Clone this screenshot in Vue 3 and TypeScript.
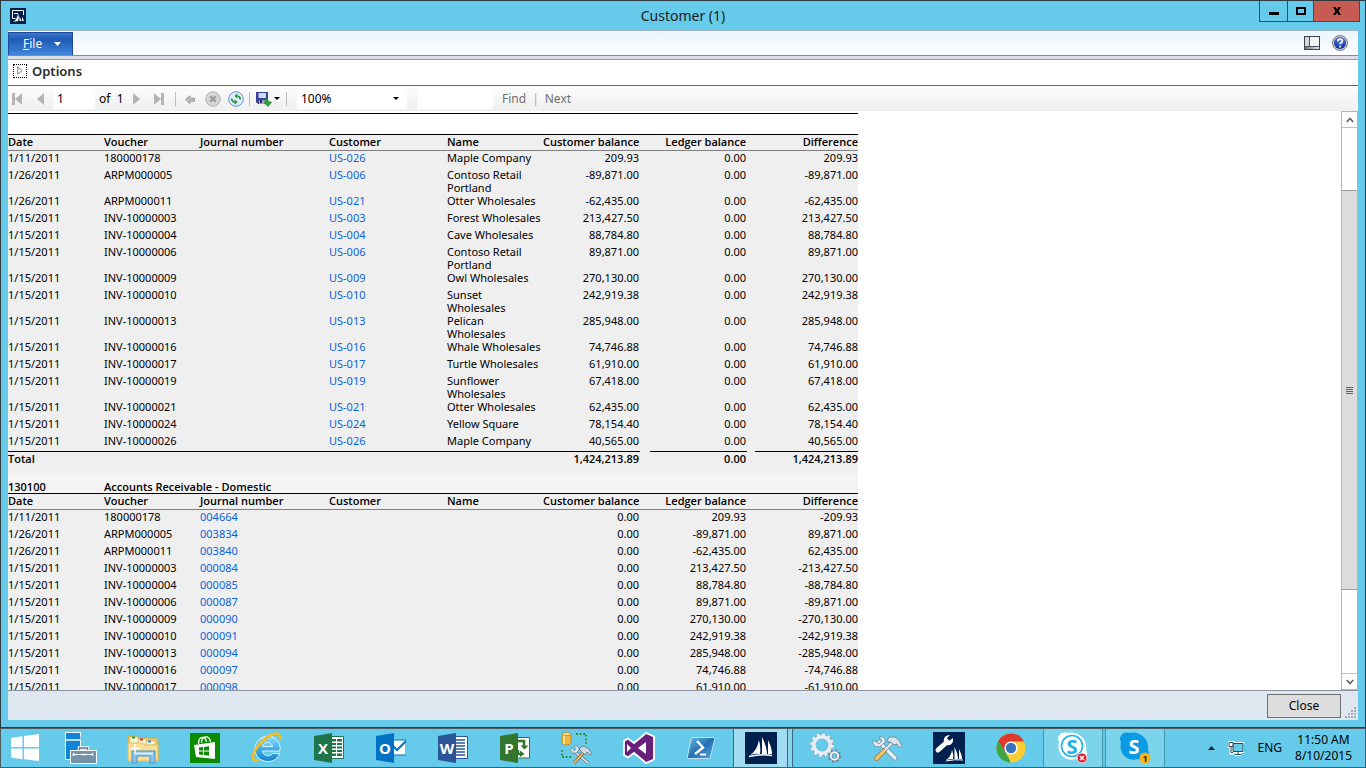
<script setup lang="ts">
import { ref } from 'vue'

interface Row {
  date: string
  voucher: string
  journal?: string
  customer?: string
  name?: string
  balance: string
  ledger: string
  difference: string
}

interface Section {
  account?: string
  title?: string
  rows: Row[]
  total?: string[]
}

const domestic = (voucher: string, code: string, name: string, amount: string, date = '1/15/2011'): Row => ({
  date,
  voucher,
  customer: code,
  name,
  balance: amount,
  ledger: '0.00',
  difference: amount,
})

const ledgerLine = (voucher: string, journal: string, amount: string, date = '1/15/2011'): Row => ({
  date,
  voucher,
  journal,
  balance: '0.00',
  ledger: amount,
  difference: amount.startsWith('-') ? amount.slice(1) : '-' + amount,
})

const sections: Section[] = [
  {
    rows: [
      domestic('180000178', 'US-026', 'Maple Company', '209.93', '1/11/2011'),
      domestic('ARPM000005', 'US-006', 'Contoso Retail\nPortland', '-89,871.00', '1/26/2011'),
      domestic('ARPM000011', 'US-021', 'Otter Wholesales', '-62,435.00', '1/26/2011'),
      domestic('INV-10000003', 'US-003', 'Forest Wholesales', '213,427.50'),
      domestic('INV-10000004', 'US-004', 'Cave Wholesales', '88,784.80'),
      domestic('INV-10000006', 'US-006', 'Contoso Retail\nPortland', '89,871.00'),
      domestic('INV-10000009', 'US-009', 'Owl Wholesales', '270,130.00'),
      domestic('INV-10000010', 'US-010', 'Sunset\nWholesales', '242,919.38'),
      domestic('INV-10000013', 'US-013', 'Pelican\nWholesales', '285,948.00'),
      domestic('INV-10000016', 'US-016', 'Whale Wholesales', '74,746.88'),
      domestic('INV-10000017', 'US-017', 'Turtle Wholesales', '61,910.00'),
      domestic('INV-10000019', 'US-019', 'Sunflower\nWholesales', '67,418.00'),
      domestic('INV-10000021', 'US-021', 'Otter Wholesales', '62,435.00'),
      domestic('INV-10000024', 'US-024', 'Yellow Square', '78,154.40'),
      domestic('INV-10000026', 'US-026', 'Maple Company', '40,565.00'),
    ],
    total: ['1,424,213.89', '0.00', '1,424,213.89'],
  },
  {
    account: '130100',
    title: 'Accounts Receivable - Domestic',
    rows: [
      ledgerLine('180000178', '004664', '209.93', '1/11/2011'),
      ledgerLine('ARPM000005', '003834', '-89,871.00', '1/26/2011'),
      ledgerLine('ARPM000011', '003840', '-62,435.00', '1/26/2011'),
      ledgerLine('INV-10000003', '000084', '213,427.50'),
      ledgerLine('INV-10000004', '000085', '88,784.80'),
      ledgerLine('INV-10000006', '000087', '89,871.00'),
      ledgerLine('INV-10000009', '000090', '270,130.00'),
      ledgerLine('INV-10000010', '000091', '242,919.38'),
      ledgerLine('INV-10000013', '000094', '285,948.00'),
      ledgerLine('INV-10000016', '000097', '74,746.88'),
      ledgerLine('INV-10000017', '000098', '61,910.00'),
    ],
  },
]

const page = ref('1')
const query = ref('')
const zoom = ref('100%')
</script>

<template>
  <div class="desktop">
    <main class="window">
      <header class="titlebar">
        <svg class="app-icon" width="16" height="16" viewBox="0 0 16 16">
          <rect width="16" height="16" fill="#00204f" />
          <path d="M5.500 10.500h-3v-8h11V7" fill="none" stroke="#fff" />
          <path d="M4 5h4v1H4zM3 14q4-2 5-9 1.500 5 0 8zM9.500 13V8l2 5zM12 13V8.500l2 4.500z" fill="#fff" />
        </svg>
        <h1>Customer (1)</h1>
        <div class="window-buttons">
          <button type="button" class="win-min" aria-label="Minimize">
            <svg width="12" height="10" viewBox="0 0 12 10"><path d="M1 6h10v3H1z" /></svg>
          </button>
          <button type="button" class="win-max" aria-label="Maximize">
            <svg width="12" height="10" viewBox="0 0 12 10"><path d="M1 1h10v8H1zM3 3v4h6V3z" fill-rule="evenodd" /></svg>
          </button>
          <button type="button" class="win-close" aria-label="Close window">
            <svg width="12" height="10" viewBox="0 0 12 10"><path d="M2 1h2.500L6 3.300 7.500 1H10L7.500 5 10 9H7.500L6 6.700 4.500 9H2l2.500-4z" /></svg>
          </button>
        </div>
      </header>

      <div class="frame">
        <div class="ribbon">
          <button type="button" class="file-menu">
            <span><u>F</u>ile</span>
            <svg width="7" height="4" viewBox="0 0 7 4"><path d="M0 0h7L3.500 4z" fill="#fff" /></svg>
          </button>
          <div class="ribbon-tools">
            <button type="button" class="plain" aria-label="Layout">
              <svg width="16" height="14" viewBox="0 0 16 14">
                <defs>
                  <linearGradient id="paneFill" x1="0" x2="1" y1="0" y2="0"><stop offset="0" stop-color="#6f757d" /><stop offset="1" stop-color="#e8ebee" /></linearGradient>
                </defs>
                <rect x=".5" y=".5" width="15" height="13" fill="#f2f2f2" stroke="#3d4650" />
                <rect x="1" y="1" width="4" height="9" fill="#d5d9de" />
                <rect x="1" y="10" width="14" height="3" fill="url(#paneFill)" />
                <path d="M5.500 1v9M1 10.500h14" stroke="#4a525c" />
              </svg>
            </button>
            <button type="button" class="plain" aria-label="Help">
              <svg width="16" height="16" viewBox="0 0 16 16">
                <defs>
                  <radialGradient id="helpFill" cx=".5" cy=".3" r=".7"><stop offset="0" stop-color="#5c86e8" /><stop offset="1" stop-color="#0a2a9c" /></radialGradient>
                </defs>
                <circle cx="8" cy="8" r="7.500" fill="#d5d5d5" stroke="#777" />
                <circle cx="8" cy="8" r="6" fill="url(#helpFill)" />
                <path d="M5.800 6.200c0-3 4.600-2.800 4.600-.2 0 1.700-2.300 1.700-2.300 3.300M8.100 10.800v1.700" fill="none" stroke="#fff" stroke-width="1.700" />
              </svg>
            </button>
          </div>
        </div>

        <section class="options">
          <button type="button" class="expander" aria-label="Expand options">
            <svg width="6" height="9" viewBox="0 0 6 9"><path d="M.7.8v7.400L5 4.500z" fill="#fff" stroke="#808080" /></svg>
          </button>
          <h2>Options</h2>
        </section>

        <div class="toolbar">
          <button type="button" class="plain nav" aria-label="First page">
            <svg width="12" height="12" viewBox="0 0 12 12"><path d="M1 0h3v12H1zM11 0v12L4 6z" fill="#b4b4b4" /></svg>
          </button>
          <button type="button" class="plain nav" aria-label="Previous page">
            <svg width="12" height="12" viewBox="0 0 12 12"><path d="M10 0v12L3 6z" fill="#b4b4b4" /></svg>
          </button>
          <input v-model="page" class="page-box" type="text" aria-label="Current page" />
          <span class="page-count">of&nbsp; 1</span>
          <button type="button" class="plain nav" aria-label="Next page">
            <svg width="12" height="12" viewBox="0 0 12 12"><path d="M3 0v12l7-6z" fill="#b4b4b4" /></svg>
          </button>
          <button type="button" class="plain nav" aria-label="Last page">
            <svg width="12" height="12" viewBox="0 0 12 12"><path d="M1 0v12l7-6zM8 0h3v12H8z" fill="#b4b4b4" /></svg>
          </button>
          <span class="rule"></span>
          <button type="button" class="plain tool" aria-label="Back">
            <svg width="16" height="16" viewBox="0 0 16 16"><path d="M3.500 8.500 8 4.800v2.400h4.500v3H8v2.400z" fill="#bdbdbd" stroke="#9a9a9a" /></svg>
          </button>
          <button type="button" class="plain tool" aria-label="Stop">
            <svg width="16" height="16" viewBox="0 0 16 16">
              <circle cx="8" cy="8" r="7.300" fill="#d6d6d6" stroke="#b4b4b4" />
              <path d="m5.200 5.200 5.600 5.600m0-5.600-5.600 5.600" stroke="#989898" stroke-width="2" />
            </svg>
          </button>
          <button type="button" class="plain tool" aria-label="Refresh">
            <svg width="16" height="16" viewBox="0 0 16 16">
              <circle cx="8" cy="8" r="7.300" fill="#e4eefc" stroke="#5f92d8" />
              <path d="M12.300 8.500c0-2-.8-3.300-3-3.500" fill="none" stroke="#24963a" stroke-width="1.700" />
              <path d="M9.500 2.200v5.400L6.300 5z" fill="#24963a" />
              <path d="M3.700 7.500c0 2 .8 3.300 3 3.500" fill="none" stroke="#24963a" stroke-width="1.700" />
              <path d="M6.500 8.400v5.400L9.700 11z" fill="#24963a" />
            </svg>
          </button>
          <span class="rule"></span>
          <button type="button" class="plain export" aria-label="Export">
            <svg width="16" height="16" viewBox="0 0 16 16">
              <path d="M0 1h12v12H2l-2-2z" fill="#3c3f96" />
              <path d="M2.500 2h7.500v5H2.500z" fill="#c9daf5" />
              <path d="M3 9h6v4H3z" fill="#a6a9bd" />
              <path d="M4 9h2v3H4z" fill="#26285e" />
              <path d="M8 8h3l2 3h2.500L12 15.500 8.500 12H10z" fill="#2eaa36" stroke="#167a20" stroke-width=".7" />
            </svg>
            <svg width="6" height="3" viewBox="0 0 6 3"><path d="M0 0h6L3 3z" /></svg>
          </button>
          <span class="rule"></span>
          <span class="zoom-box">
            <select v-model="zoom" aria-label="Zoom">
              <option>100%</option>
              <option>150%</option>
              <option>200%</option>
            </select>
            <svg width="6" height="3" viewBox="0 0 6 3"><path d="M0 0h6L3 3z" /></svg>
          </span>
          <input v-model="query" class="find-box" type="text" aria-label="Find text" />
          <button type="button" class="plain find">Find</button>
          <span class="bar">|</span>
          <button type="button" class="plain find">Next</button>
        </div>

        <div class="viewer">
          <div class="report">
            <table v-for="(section, s) in sections" :key="s">
              <colgroup>
                <col class="c-date" /><col class="c-voucher" /><col class="c-journal" /><col class="c-customer" />
                <col class="c-name" /><col class="c-balance" /><col class="c-ledger" /><col class="c-difference" />
              </colgroup>
              <thead>
                <tr v-if="section.account" class="account">
                  <th>{{ section.account }}</th>
                  <th colspan="7">{{ section.title }}</th>
                </tr>
                <tr class="heads">
                  <th>Date</th>
                  <th>Voucher</th>
                  <th>Journal number</th>
                  <th>Customer</th>
                  <th>Name</th>
                  <th class="num">Customer balance</th>
                  <th class="num">Ledger balance</th>
                  <th class="num last">Difference</th>
                </tr>
              </thead>
              <tbody>
                <tr v-for="row in section.rows" :key="row.voucher">
                  <td>{{ row.date }}</td>
                  <td>{{ row.voucher }}</td>
                  <td><a v-if="row.journal" href="#">{{ row.journal }}</a></td>
                  <td><a v-if="row.customer" href="#">{{ row.customer }}</a></td>
                  <td class="name">{{ row.name }}</td>
                  <td class="num">{{ row.balance }}</td>
                  <td class="num">{{ row.ledger }}</td>
                  <td class="num last">{{ row.difference }}</td>
                </tr>
              </tbody>
              <tfoot v-if="section.total">
                <tr>
                  <th colspan="5"><div>Total</div></th>
                  <td v-for="(sum, i) in section.total" :key="i" class="sum"><div>{{ sum }}</div></td>
                </tr>
              </tfoot>
            </table>
          </div>
          <div class="scrollbar">
            <button type="button" class="arrow" aria-label="Scroll up">
              <svg width="8" height="6" viewBox="0 0 8 6"><path d="m.8 5 3.200-3.500L7.200 5" fill="none" stroke="#606060" stroke-width="1.600" /></svg>
            </button>
            <div class="track">
              <div class="thumb"><i></i><i></i><i></i><i></i></div>
            </div>
            <button type="button" class="arrow" aria-label="Scroll down">
              <svg width="8" height="6" viewBox="0 0 8 6"><path d="M.8 1 4 4.500 7.200 1" fill="none" stroke="#606060" stroke-width="1.600" /></svg>
            </button>
          </div>
        </div>

        <footer class="footer">
          <button type="button" class="close-button">Close</button>
          <svg class="grip" width="11" height="11" viewBox="0 0 11 11">
            <path d="M9 0h2v2H9zM9 3h2v2H9zM6 3h2v2H6zM9 6h2v2H9zM6 6h2v2H6zM3 6h2v2H3zM9 9h2v2H9zM6 9h2v2H6zM3 9h2v2H3zM0 9h2v2H0z" fill="#a9adb2" />
          </svg>
        </footer>
      </div>
    </main>

    <nav class="taskbar">
      <button type="button" class="start" aria-label="Start">
        <svg width="28" height="28" viewBox="0 0 28 28">
          <path d="M0 4 11.500 2.300V13H0zM13 2.100 28 0v13H13zM0 14.500h11.500v10.700L0 23.500zM13 14.500h15V27l-15-1.700z" fill="#fff" />
        </svg>
      </button>

      <button type="button" class="slot" aria-label="Server Manager">
        <svg width="32" height="32" viewBox="0 0 32 32">
          <path d="M.5.500h15v27H.5z" fill="#0f84da" stroke="#fff" />
          <path d="M.5 8 15.500 4.500V8z" fill="#0f84da" /><path d="M0 8h16" stroke="#fff" stroke-width="1.500" />
          <path d="M14.500 18v-2h8v2" fill="none" stroke="#fff" stroke-width="3.500" />
          <path d="M14.500 18v-2h8v2" fill="none" stroke="#5a7690" stroke-width="1.500" />
          <path d="M5.500 18.500h26v13h-26z" fill="#7592ad" stroke="#fff" />
          <path d="M8 22.500h9m2 0h9" stroke="#fff" /><path d="M8.500 21v3m19-3v3M17 22.500h3" stroke="#fff" stroke-width="1.500" />
        </svg>
      </button>

      <button type="button" class="slot" aria-label="File Explorer">
        <svg width="32" height="32" viewBox="0 0 32 32">
          <path d="M1 4h9l2 2h17l2 2v19H1z" fill="#e7c873" stroke="#c9a650" />
          <path d="M3 5h8v7H3zM11 7h8v5h-8zM19 9h9v4h-9z" fill="#fff6d8" stroke="#d6b65f" stroke-width=".6" />
          <path d="M5 4.500h3v2H5z" fill="#12a32a" /><path d="M13 6.500h3v2h-3z" fill="#dc3025" /><path d="M21 8.500h3v2h-3z" fill="#2688dc" />
          <path d="M1 11h14l3 2h13v16H1z" fill="#f8df91" stroke="#dfbf68" />
          <path d="M5 31V19h23v12h-5v-7H10v7z" fill="#86c1e6" stroke="#5393c4" />
          <path d="M7 20.500h19v2H7z" fill="#d6effd" />
          <path d="M8 12v9m-4.500-4.500h9" stroke="#fff" stroke-width="1.400" />
        </svg>
      </button>

      <button type="button" class="slot" aria-label="Store">
        <svg width="30" height="30" viewBox="0 0 30 30">
          <path d="M0 0h30v30H0z" fill="#0a8c00" />
          <path d="M8.500 11c0-8 7-9 8-2m-5 1c0-8 8-8 9-1" fill="none" stroke="#fff" stroke-width="1.300" />
          <path d="m4 12 21-3v17L6 24z" fill="#fff" />
          <path d="m9 14.500 4-.5v3.500H9zM14 13.900l5-.6v4.200h-5zM9 18.500h4V22l-4-.4zM14 18.500h5v4.200l-5-.6z" fill="#0a8c00" />
        </svg>
      </button>

      <button type="button" class="slot" aria-label="Internet Explorer">
        <svg width="32" height="32" viewBox="0 0 32 32">
          <defs>
            <linearGradient id="ieFill" x1="0" x2="0" y1="0" y2="1"><stop offset="0" stop-color="#9be2fb" /><stop offset=".5" stop-color="#40aee9" /><stop offset="1" stop-color="#1781cd" /></linearGradient>
          </defs>
          <path d="M17 4C10 4 4 9.500 4 17s6 12.500 13 12.500c5.500 0 10-3 11.500-8h-7c-2.500 4-10 2.500-10-2.500h17.500C30 10 24.500 4 17 4zm-5.500 10.500c1-5.500 9-5.500 10 0z" fill="url(#ieFill)" stroke="#d6f4ff" />
          <path d="M6.500 28C-1 30 1 20 10 11 19 1 30-2 29 7" fill="none" stroke="#f5bc22" stroke-width="2.600" stroke-linecap="round" />
        </svg>
      </button>

      <button type="button" class="slot" aria-label="Excel">
        <svg width="30" height="32" viewBox="0 0 30 32">
          <path d="M16 4.500h13.500v22H16z" fill="#fff" stroke="#20744a" />
          <path d="M17 7h5v2.500h-5zM23 7h5v2.500h-5zM17 11h5v2h-5zM23 11h5v2h-5zM17 14.500h5v2h-5zM23 14.500h5v2h-5zM17 18h5v2h-5zM23 18h5v2h-5zM17 21.500h5V24h-5zM23 21.500h5V24h-5z" fill="#20744a" />
          <path d="M0 4 18 1v30L0 28z" fill="#20744a" />
          <text x="9" y="21.500">X</text>
        </svg>
      </button>

      <button type="button" class="slot" aria-label="Outlook">
        <svg width="30" height="32" viewBox="0 0 30 32">
          <path d="M16 8h14v15H16z" fill="#fff" stroke="#0072c6" />
          <path d="m16 13 5 5 9-9" fill="none" stroke="#0072c6" stroke-width="2" />
          <path d="M0 4 18 1v30L0 28z" fill="#0072c6" />
          <text x="9" y="21.500">O</text>
        </svg>
      </button>

      <button type="button" class="slot" aria-label="Word">
        <svg width="30" height="32" viewBox="0 0 30 32">
          <path d="M16 4.500h13.500v22H16z" fill="#fff" stroke="#2a5699" />
          <path d="M18 8h9M18 11h9M18 14h9M18 17h9M18 20h9M18 23h9" stroke="#2a5699" stroke-width="1.300" />
          <path d="M0 4 18 1v30L0 28z" fill="#2a5699" />
          <text x="9" y="21.500">W</text>
        </svg>
      </button>

      <button type="button" class="slot" aria-label="Project">
        <svg width="30" height="32" viewBox="0 0 30 32">
          <path d="M16 5.500h13.500v20.500H16z" fill="#fff" stroke="#31752f" />
          <path d="M18 9h6v6M20 22h-2v-4" fill="none" stroke="#31752f" stroke-width="2.500" />
          <path d="M20.500 13.500h8l-4 4zM20 18.500l4.500 3.500-4.500 3z" fill="#31752f" />
          <path d="M0 4 18 1v30L0 28z" fill="#31752f" />
          <text x="9" y="21.500">P</text>
        </svg>
      </button>

      <button type="button" class="slot" aria-label="SQL Server Management Studio">
        <svg width="32" height="32" viewBox="0 0 32 32">
          <path d="M15 2h10v11M1 18v7h11" fill="none" stroke="#2c8c30" stroke-width="1.800" stroke-dasharray="1.800 1.800" />
          <path d="M1 2v9c0 2.500 9 2.500 9 0V2z" fill="#eeb73b" stroke="#b47a18" stroke-width=".7" />
          <path d="M3 3v9" stroke="#fff2ac" stroke-width="1.600" />
          <ellipse cx="5.500" cy="2" rx="4.500" ry="1.600" fill="#fbe18a" stroke="#b47a18" stroke-width=".7" />
          <path d="m14 20 13 11" stroke="#6f7e8c" stroke-width="3" /><path d="m14 20 13 11" stroke="#e8edf1" stroke-width="1.600" />
          <path d="M11 15c-3 3 0 7 4 6l3-3c0-4-3-5-5-4l2 3-2 2z" fill="#dde4ea" stroke="#6f7e8c" stroke-width=".7" />
          <path d="m13 31 10-11" stroke="#a1681c" stroke-width="3" /><path d="m13 31 10-11" stroke="#efc66a" stroke-width="1.400" />
          <path d="m18 17 4-3 6 3 3 5-2 1-3-3-2 3z" fill="#d2d9df" stroke="#66737f" stroke-width=".8" />
        </svg>
      </button>

      <button type="button" class="slot" aria-label="Visual Studio">
        <svg width="32" height="32" viewBox="0 0 32 32">
          <path d="m1 9 4-2.500 6 4.500L23 1l8 3.500v23L23 31 11 21l-6 4.500L1 23z" fill="#68217a" stroke="#fff" stroke-width="1.800" />
          <path d="m4 12 4 4-4 4zM15 16l8-6v12z" fill="#fff" />
        </svg>
      </button>

      <button type="button" class="slot" aria-label="PowerShell">
        <svg width="30" height="32" viewBox="0 0 30 32">
          <defs>
            <linearGradient id="psFill" x1="0" x2="1" y1="0" y2="1"><stop offset="0" stop-color="#77bce6" /><stop offset=".5" stop-color="#2270b4" /><stop offset="1" stop-color="#5aa9df" /></linearGradient>
          </defs>
          <path d="M7 5.500h20q2 0 1.600 2L24.500 25q-.4 1.500-2 1.500h-20Q1 26.500 1.400 25L5 7q.4-1.500 2-1.500z" fill="url(#psFill)" stroke="#bde0f4" />
          <path d="m11 9 6 6.500L9 22" fill="none" stroke="#fff" stroke-width="2.400" />
          <path d="M14 22.500h6" stroke="#fff" stroke-width="2" />
        </svg>
      </button>

      <button type="button" class="slot grouped active" aria-label="Dynamics AX">
        <svg width="32" height="32" viewBox="0 0 32 32">
          <path d="M0 0h32v32H0z" fill="#00204f" />
          <path d="M5 23Q12 19 14 8q2 8 1 14-5-1-10 1zM17 22V5q5 10 5 17zM23 22V8q4 8 4 14z" fill="#fff" />
          <path d="M4 24.500q12-3 23-1" fill="none" stroke="#fff" stroke-width="1.600" />
        </svg>
      </button>

      <button type="button" class="slot" aria-label="Services">
        <svg width="32" height="32" viewBox="0 0 32 32">
          <circle cx="13" cy="13" r="10.500" fill="none" stroke="#84acc5" stroke-width="4" stroke-dasharray="3 2.500" />
          <circle cx="13" cy="13" r="8.500" fill="none" stroke="#84acc5" stroke-width="5" />
          <circle cx="13" cy="13" r="10.500" fill="none" stroke="#eef4f7" stroke-width="2.600" stroke-dasharray="2.600 2.900" />
          <circle cx="13" cy="13" r="8.200" fill="none" stroke="#e5eff5" stroke-width="3.600" />
          <circle cx="25.500" cy="24" r="5" fill="none" stroke="#6a7f8e" stroke-width="3" stroke-dasharray="2 1.900" />
          <circle cx="25.500" cy="24" r="3.700" fill="#66cbea" stroke="#6a7f8e" stroke-width="3" />
          <circle cx="25.500" cy="24" r="3.700" fill="none" stroke="#eef4f7" stroke-width="2" />
        </svg>
      </button>

      <button type="button" class="slot" aria-label="Tools">
        <svg width="32" height="32" viewBox="0 0 32 32">
          <path d="m8 10 16 16" stroke="#70899c" stroke-width="4.600" stroke-linecap="round" />
          <path d="m8 10 16 16" stroke="#e6eff5" stroke-width="3.200" stroke-linecap="round" />
          <path d="M2 8c-1 6 4 8 8 6l4-4c1-4-3-6-6-5l3 4-3 3z" fill="#e6eef3" stroke="#70899c" stroke-width=".8" />
          <path d="m5.500 26.500 8-8" stroke="#ab772a" stroke-width="5" stroke-linecap="round" />
          <path d="m5.500 26.500 8-8" stroke="#edc36b" stroke-width="3.200" stroke-linecap="round" />
          <path d="m14 18 8-8" stroke="#70899c" stroke-width="3.600" /><path d="m14 18 8-8" stroke="#e6eff5" stroke-width="2.200" />
          <path d="m16 9 2-4h6l4 3 2 4 1 2-3 2-2-4-3 1-2-2z" fill="#dbe3ea" stroke="#758899" stroke-width=".9" />
        </svg>
      </button>

      <button type="button" class="slot" aria-label="Dynamics AX configuration">
        <svg width="32" height="32" viewBox="0 0 32 32">
          <path d="M0 0h32v32H0z" fill="#00204f" />
          <path d="m5 18 9-8" stroke="#fff" stroke-width="5" stroke-linecap="round" />
          <path d="M12 12c-3-5 0-9 5-9l-3 3 2 3 4-3c1 6-4 9-8 6z" fill="#fff" />
          <path d="M13 28q5-3 6-10 2 5 1 9-3 0-7 1zM21.500 27V15q3.500 6 3.500 12zM26 27V17q3 6 3 10z" fill="#fff" />
          <path d="M13 29q9-2 17-1" fill="none" stroke="#fff" />
        </svg>
      </button>

      <button type="button" class="slot" aria-label="Chrome">
        <svg width="30" height="30" viewBox="0 0 30 30">
          <circle cx="15" cy="15" r="14.500" fill="#fbcf33" />
          <path d="M2.300 8A14.500 14.500 0 0 1 28 8.500H15z" fill="#dd392c" />
          <path d="M2.300 8 15 8.500l-6 10 6 11A14.500 14.500 0 0 1 2.300 8z" fill="#3fa646" />
          <path d="M2.300 8 9 18.500 14 8.500z" fill="#dd392c" />
          <path d="m2.300 8 6.700 10.500L14 29.500A14.500 14.500 0 0 1 2.300 8z" fill="#3fa646" />
          <circle cx="15" cy="15" r="6.600" fill="#fff" /><circle cx="15" cy="15" r="5.200" fill="#3772bd" />
        </svg>
      </button>

      <button type="button" class="slot running" aria-label="Skype">
        <svg width="32" height="32" viewBox="0 0 32 32">
          <path d="M10 1C4-1-1 5 2 10c-3 12 7 20 17 17 8 4 13-3 10-9C31 7 20-2 10 1z" fill="#fff" />
          <circle cx="15" cy="14" r="10.500" fill="none" stroke="#1eb2eb" stroke-width="1.600" />
          <text x="15" y="21.500" class="skype blue">S</text>
          <circle cx="25" cy="26" r="5" fill="#df1d2d" stroke="#fff" stroke-width=".8" />
          <path d="m23 24 4 4m0-4-4 4" stroke="#fff" stroke-width="1.500" />
        </svg>
      </button>

      <button type="button" class="slot running" aria-label="Skype for Business">
        <svg width="32" height="32" viewBox="0 0 32 32">
          <path d="M10 1C4-1-1 5 2 10c-3 12 7 20 17 17 8 4 13-3 10-9C31 7 20-2 10 1z" fill="#0a9be2" />
          <text x="15" y="22" class="skype">S</text>
          <circle cx="26" cy="26" r="5.500" fill="#fdb515" />
          <text x="26" y="29.500" class="badge">1</text>
        </svg>
      </button>

      <div class="tray">
        <button type="button" class="plain" aria-label="Show hidden icons">
          <svg width="7" height="4" viewBox="0 0 7 4"><path d="M3.500 0 7 4H0z" fill="#222" /></svg>
        </button>
        <button type="button" class="plain" aria-label="Network">
          <svg width="16" height="15" viewBox="0 0 16 15">
            <path d="M5 2.500h10v8H5zM7 13.500h6M10 11v2" fill="none" stroke="#fff" stroke-width="3" />
            <path d="M1 1.500h4v4H1zM3 5v7h3" fill="#fff" stroke="#fff" stroke-width="3" />
            <path d="M5 2.500h10v8H5z" fill="#66cbea" stroke="#34494f" />
            <path d="M7 13.500h6M10 11v2" stroke="#34494f" />
            <path d="M1 1.500h4v4H1z" fill="#fff" stroke="#34494f" /><path d="M3 6v5.500h2" fill="none" stroke="#34494f" />
          </svg>
        </button>
        <span class="lang">ENG</span>
        <time class="clock">11:50 AM<br />8/10/2015</time>
      </div>
    </nav>
  </div>
</template>

<style>
html,
body {
  margin: 0;
  overflow: hidden;
}
</style>

<style scoped>
* {
  box-sizing: border-box;
}

.desktop {
  display: flex;
  flex-direction: column;
  height: 100vh;
  background: #66cbea;
  color: #000;
  font-family: 'Noto Sans', 'Open Sans', sans-serif;
  font-size: 12px;
  line-height: 16px;
}

button,
input,
select {
  margin: 0;
  padding: 0;
  border: 0;
  border-radius: 0;
  background: none;
  color: inherit;
  font: inherit;
}

svg {
  display: block;
  flex: none;
}

.plain {
  display: flex;
  align-items: center;
  justify-content: center;
}

.window {
  display: flex;
  flex: 1;
  flex-direction: column;
  min-height: 0;
  padding: 0 7px 7px;
  border: 1px solid #2f3a40;
}

.titlebar {
  display: grid;
  grid-template-columns: 1fr auto 1fr;
  align-items: center;
  height: 29px;
}

.app-icon {
  margin-left: 2px;
}

h1 {
  margin: 0;
  color: #1c1c1c;
  font-size: 14px;
  font-weight: 400;
  line-height: 20px;
}

.window-buttons {
  display: flex;
  align-self: start;
  justify-self: end;
  height: 21px;
  margin-right: -2px;
  border: 1px solid #2b5361;
  border-top: 0;
}

.window-buttons button {
  display: flex;
  align-items: center;
  justify-content: center;
  width: 27px;
}

.window-buttons .win-max {
  width: 27px;
  border-right: 1px solid #2b5361;
  border-left: 1px solid #2b5361;
}

.window-buttons .win-close {
  width: 45px;
  background: #c75b53;
}

.frame {
  display: flex;
  flex: 1;
  flex-direction: column;
  min-height: 0;
}

.ribbon {
  display: flex;
  justify-content: space-between;
  height: 26px;
  border-top: 1px solid #9fb4c0;
  border-bottom: 1px solid #858a96;
  background: linear-gradient(#eaf5fe, #fdfefe);
}

.file-menu {
  display: flex;
  align-items: center;
  gap: 12px;
  width: 65px;
  margin-top: 1px;
  padding-left: 14px;
  border: 1px solid #1b4aa0;
  border-bottom: 0;
  background: linear-gradient(#3a78cc, #1f5bb4 30%, #4186dd);
  color: #fff;
}

.ribbon-tools {
  display: flex;
  gap: 12px;
  padding-right: 10px;
}

.options {
  display: flex;
  align-items: center;
  gap: 5px;
  height: 30px;
  padding: 4px 5px;
  border-bottom: 1px solid #65696b;
  background: linear-gradient(#dfdfea 3px, #9a9aa2 3px, #9a9aa2 4px, #fff 4px);
}

.expander {
  display: flex;
  align-items: center;
  justify-content: center;
  width: 14px;
  height: 14px;
  border: 1px dotted #000;
}

h2 {
  margin: 0;
  color: #2a2a2a;
  font-size: 13px;
  font-weight: 600;
  line-height: 16px;
}

.toolbar {
  display: flex;
  align-items: center;
  height: 25px;
  background: linear-gradient(#fdfdfd, #efefef);
}

.nav {
  width: 23px;
  height: 20px;
  padding-right: 6px;
}

.page-box {
  width: 41px;
  height: 21px;
  padding-left: 3px;
  background: #fff;
}

.page-count {
  width: 32px;
  padding-left: 4px;
  white-space: nowrap;
}

.rule {
  width: 1px;
  height: 14px;
  margin: 0 2px;
  background: #bdbdbd;
}

.tool {
  width: 23px;
  height: 20px;
}

.export {
  gap: 2px;
  padding: 0 4px;
}

.zoom-box {
  display: grid;
  grid-template-columns: 1fr 14px;
  align-items: center;
  width: 110px;
  height: 21px;
  margin-left: 8px;
  background: #fff;
}

.zoom-box select {
  grid-area: 1 / 1 / 2 / 3;
  height: 21px;
  padding-left: 4px;
  appearance: none;
}

.zoom-box svg {
  grid-area: 1 / 2 / 2 / 3;
  pointer-events: none;
}

.find-box {
  width: 75px;
  height: 21px;
  margin: 0 3px 0 11px;
  background: #fff;
}

.find {
  margin: 0 6px;
  color: #707070;
}

.bar {
  color: #a8a8a8;
}

.viewer {
  display: flex;
  flex: 1;
  min-height: 0;
  background: #fff;
}

.report {
  flex: 1;
  overflow: auto;
  padding-top: 2px;
  font-size: 11px;
  line-height: 13px;
  scrollbar-width: none;
}

.report::before {
  display: block;
  width: 850px;
  height: 20px;
  border-top: 1px solid #000;
  content: '';
}

table {
  width: 850px;
  border-spacing: 0;
  background: #efefef;
  table-layout: fixed;
}

.c-date,
.c-voucher {
  width: 96px;
}

.c-journal {
  width: 129px;
}

.c-customer {
  width: 118px;
}

.c-name {
  width: 96px;
}

.c-balance {
  width: 97px;
}

.c-ledger {
  width: 107px;
}

tr {
  height: 17px;
}

th,
td {
  padding: 0;
  text-align: left;
  vertical-align: top;
  white-space: nowrap;
}

th,
.sum {
  font-family: 'Open Sans', 'Noto Sans', sans-serif;
  font-weight: 600;
}

.heads th {
  border-top: 1px solid #000;
  border-bottom: 1px solid #808080;
}

.account {
  height: 20px;
  background: #f4f4f4;
}

.account th {
  vertical-align: bottom;
}

.name {
  white-space: pre-line;
}

.num {
  padding-right: 1px;
  text-align: right;
}

.num.last {
  padding-right: 0;
}

tfoot tr {
  height: 22px;
}

tfoot div {
  border-top: 1px solid #000;
}

.sum {
  text-align: right;
}

.sum div {
  padding-right: 1px;
}

.sum + .sum div {
  margin-left: 10px;
}

.sum:last-child div {
  margin-left: 8px;
  padding-right: 0;
}

a {
  color: #0b62dc;
  text-decoration: none;
}

.scrollbar {
  display: flex;
  flex-direction: column;
  width: 17px;
  border: 1px solid #b4b4b4;
}

.arrow {
  display: flex;
  align-items: center;
  justify-content: center;
  height: 16px;
  border-bottom: 1px solid #c0c0c0;
}

.arrow:last-child {
  border-top: 1px solid #c0c0c0;
  border-bottom: 0;
}

.track {
  display: flex;
  flex: 1;
  flex-direction: column;
  padding: 62px 0 83px;
}

.thumb {
  display: flex;
  flex: 1;
  flex-direction: column;
  align-items: center;
  justify-content: center;
  gap: 1px;
  border-top: 1px solid #9c9c9c;
  border-bottom: 1px solid #9c9c9c;
  background: #dcdcdc;
}

.thumb i {
  width: 7px;
  height: 1px;
  background: #606060;
}

.footer {
  display: flex;
  align-items: flex-end;
  justify-content: flex-end;
  gap: 4px;
  height: 30px;
  padding: 0 2px 2px 0;
  border-top: 1px solid #8a93a0;
  background: #dfe7f0;
}

.close-button {
  width: 74px;
  height: 24px;
  border: 1px solid #707070;
  background: #dddddd;
}

.taskbar {
  display: flex;
  height: 40px;
  border: 1px solid #4e5c61;
}

.start {
  display: flex;
  align-items: center;
  width: 49px;
  padding-left: 10px;
}

.slot {
  display: flex;
  align-items: center;
  justify-content: center;
  width: 62px;
}

.slot text {
  fill: #fff;
  font-family: 'Open Sans', 'Noto Sans', sans-serif;
  font-size: 15px;
  font-weight: 700;
  text-anchor: middle;
}

.slot .skype {
  font-size: 20px;
}

.slot .blue {
  fill: #1eb2eb;
}

.slot .badge {
  fill: #222;
  font-size: 9px;
}

.grouped {
  width: 60px;
  margin: 0 1px;
  padding-right: 5px;
  border: 1px solid #366a7b;
  border-width: 0 1px;
  background: linear-gradient(90deg, #a2dcf2 53px, #366a7b 53px, #366a7b 54px, #8bd5ee 54px);
}

.running {
  width: 60px;
  margin: 0 1px;
  border: 1px solid #4594ac;
  border-width: 0 1px;
  background: #7bd3ec;
}

.tray {
  display: flex;
  align-items: center;
  gap: 13px;
  margin-left: auto;
  padding-right: 13px;
}

.clock {
  text-align: center;
}
</style>
